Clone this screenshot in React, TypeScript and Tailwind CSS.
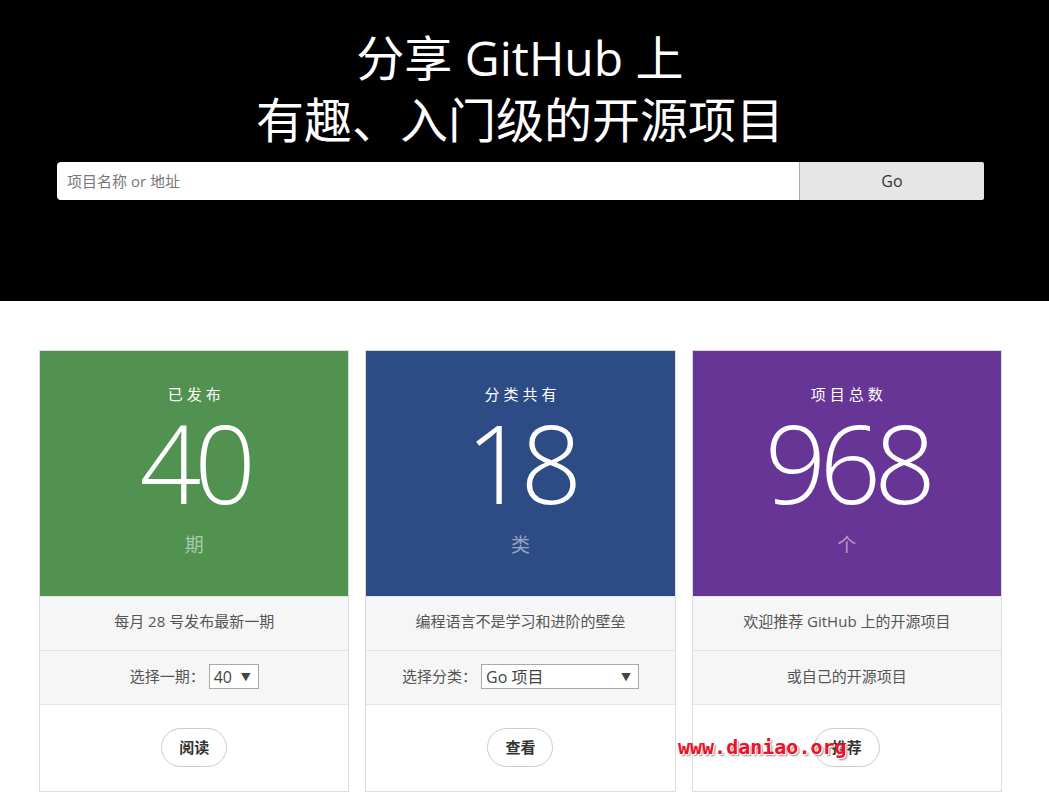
import React from "react";

const cards = [
  {
    title: "已发布",
    value: "40",
    unit: "期",
    bg: "bg-[#529250]",
    desc: "每月 28 号发布最新一期",
    kind: "volume",
    action: "阅读",
  },
  {
    title: "分类共有",
    value: "18",
    unit: "类",
    bg: "bg-[#2d4b85]",
    desc: "编程语言不是学习和进阶的壁垒",
    kind: "category",
    action: "查看",
  },
  {
    title: "项目总数",
    value: "968",
    unit: "个",
    bg: "bg-[#673596]",
    desc: "欢迎推荐 GitHub 上的开源项目",
    kind: "text",
    action: "推荐",
  },
];

function Arrow() {
  return <span className="text-[10px] text-[#444] leading-none">▼</span>;
}

export default function App() {
  return (
    <div
      className="relative w-[1049px] h-[794px] overflow-hidden bg-white"
      style={{ fontFamily: '"Open Sans", "Noto Sans CJK SC", sans-serif' }}
    >
      {/* Header */}
      <header className="h-[301px] bg-black">
        <div className="w-[1040px] pt-[27px] text-center text-white">
          <h1 className="text-[48px] leading-[62px] font-normal">
            分享 GitHub 上
            <br />
            有趣、入门级的开源项目
          </h1>
        </div>
        <div className="ml-[57px] mt-[11px] flex h-[38px]">
          <input
            type="text"
            placeholder="项目名称 or 地址"
            className="w-[742px] h-full rounded-l-[4px] bg-white px-[10px] text-[15px] text-[#555] placeholder:text-[#777] outline-none"
          />
          <button className="w-[185px] h-full rounded-r-[2px] bg-[#e6e6e6] border-l border-[#aaa] text-[16px] text-[#333]">
            Go
          </button>
        </div>
      </header>

      {/* Stats */}
      <main className="ml-[39px] mt-[49px] grid w-[963px] grid-cols-3 gap-[16px]">
        {cards.map((c) => (
          <div key={c.title} className="border border-[#ddd] text-center">
            <div className={`${c.bg} h-[245px] pt-[33px] text-white`}>
              <p className="pl-[4px] text-[15px] leading-[20px] tracking-[4px]">{c.title}</p>
              <p className="mt-[9px] text-[108px] leading-[100px] font-light tracking-[-7px]">{c.value}</p>
              <p className="mt-[20px] text-[19px] leading-[24px] text-white/50">{c.unit}</p>
            </div>
            <div className="h-[54px] pb-[4px] border-t border-[#e5e5e5] bg-[#f6f6f6] flex items-center justify-center text-[15px] text-[#555]">
              {c.desc}
            </div>
            <div className="h-[54px] pb-[2px] border-t border-[#e5e5e5] bg-[#f6f6f6] flex items-center justify-center text-[15px] text-[#555]">
              {c.kind === "volume" && (
                <>
                  <span>选择一期：</span>
                  <span className="ml-[4px] flex h-[25px] w-[50px] items-center justify-between border border-[#a9a9a9] bg-white pl-[4px] pr-[7px] text-[16px] text-[#444]">
                    40 <Arrow />
                  </span>
                </>
              )}
              {c.kind === "category" && (
                <>
                  <span>选择分类：</span>
                  <span className="ml-[4px] flex h-[25px] w-[158px] items-center justify-between border border-[#a9a9a9] bg-white pl-[4px] pr-[7px] text-[16px] text-[#444]">
                    Go 项目 <Arrow />
                  </span>
                </>
              )}
              {c.kind === "text" && <span>或自己的开源项目</span>}
            </div>
            <div className="h-[87px] border-t border-[#e5e5e5] bg-white pt-[23px] flex justify-center">
              <button className="h-[39px] w-[66px] rounded-full border border-[#ccc] text-[15px] font-bold text-[#333]">
                {c.action}
              </button>
            </div>
          </div>
        ))}
      </main>

      {/* Watermark overlay */}
      <span
        className="absolute left-[678px] top-[733px] text-[20px] font-bold leading-[28px] text-[#f0102a]"
        style={{ fontFamily: '"DejaVu Sans Mono", "Liberation Mono", monospace', textShadow: "1px 1px 0 #fff, 2px 2px 2px #888" }}
      >
        www.daniao.org
      </span>
    </div>
  );
}
